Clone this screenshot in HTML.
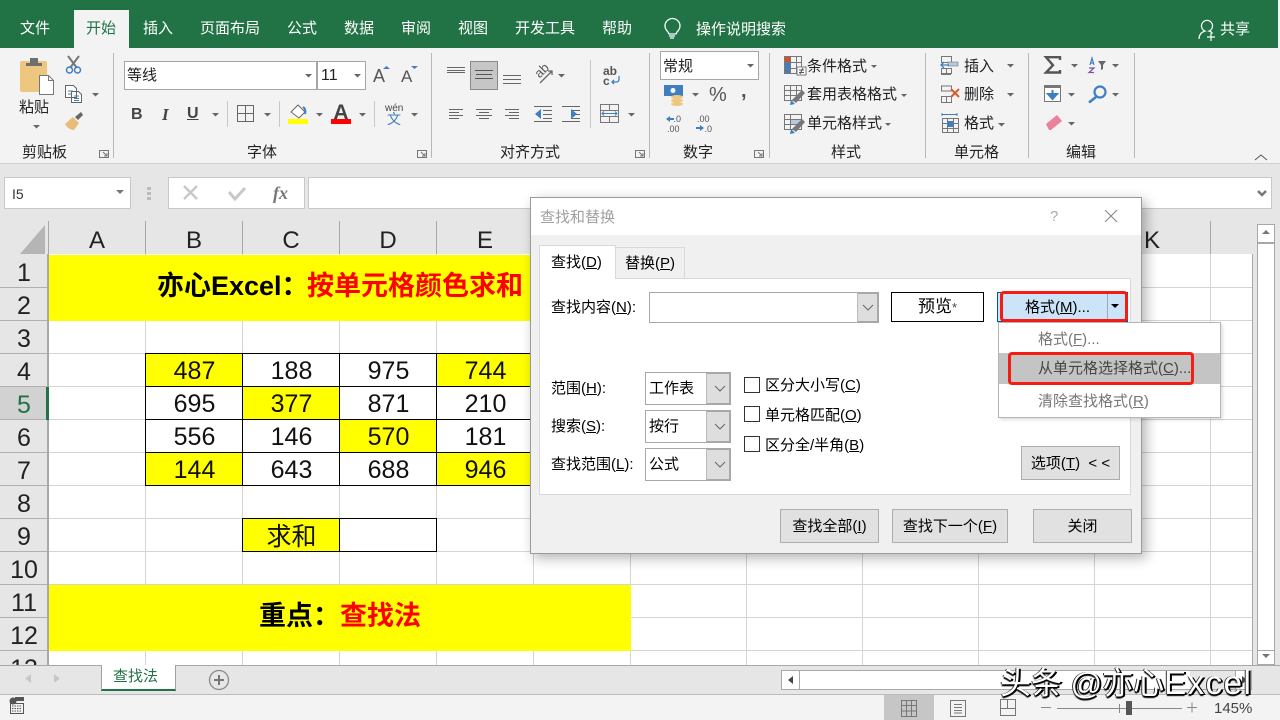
<!DOCTYPE html>
<html><head><meta charset="utf-8"><style>
html,body{margin:0;padding:0}
body{width:1280px;height:720px;overflow:hidden;position:relative;background:#e6e6e6;font-family:"Liberation Sans","Noto Sans CJK SC",sans-serif;color:#222}
div{position:absolute;box-sizing:border-box}
.t{white-space:nowrap;font-size:15px;line-height:20px;height:20px;padding-top:1px}
.w{color:#fff}.c{text-align:center;transform:translateX(-50%)}
.d{color:#000;font-size:15px}
.n{font-size:25px;line-height:33px;height:33px;width:97px;text-align:center;color:#111;padding-top:1px}
.r{font-size:25px;line-height:33px;height:33px;width:48px;left:0;text-align:center;color:#222;border-bottom:1px solid #b0b0b0;padding-top:2px}
.h{font-size:24px;line-height:33px;top:221px;height:33px;text-align:center;color:#222;transform:translateX(-50%);padding-top:3px}
.y{background:#ff0;height:33px}
.sel{background:#fff;border:1px solid #a8a8a8;height:33px;left:645px;width:86px}
.sel i{position:absolute;right:-1px;top:-1px;bottom:-1px;width:22px;background:#dedede;border:2px solid #a8a8a8;border-left:1px solid #bbb}
.btn{background:#e1e1e1;border:1px solid #adadad;text-align:center;font-size:15px;color:#000;line-height:34px}
.cb{width:16px;height:16px;left:744px;border:1px solid #333;background:#fff}
u{text-underline-offset:1px}
</style></head><body>
<!-- ribbon -->
<div style="left:0;top:0;width:1278px;height:48px;background:#217346"></div>
<div style="left:1278px;top:0;width:2px;height:48px;background:#f3f3f3"></div>
<div style="left:74px;top:10px;width:55px;height:38px;background:#f3f3f3"></div>
<div style="left:0;top:48px;width:1280px;height:116px;background:#f3f3f3;border-bottom:1px solid #d2d2d2"></div>
<div class="t w" style="left:20px;top:18px">文件</div>
<div class="t" style="left:86px;top:18px;color:#217346">开始</div>
<div class="t w" style="left:143px;top:18px">插入</div>
<div class="t w" style="left:200px;top:18px">页面布局</div>
<div class="t w" style="left:287px;top:18px">公式</div>
<div class="t w" style="left:344px;top:18px">数据</div>
<div class="t w" style="left:401px;top:18px">审阅</div>
<div class="t w" style="left:458px;top:18px">视图</div>
<div class="t w" style="left:515px;top:18px">开发工具</div>
<div class="t w" style="left:602px;top:18px">帮助</div>
<div class="t w" style="left:696px;top:19px">操作说明搜索</div>
<div class="t w" style="left:1220px;top:19px">共享</div>

<div style="left:124px;top:61px;width:193px;height:29px;background:#fff;border:1px solid #a6a6a6"></div>
<div style="left:317px;top:61px;width:49px;height:29px;background:#fff;border:1px solid #a6a6a6"></div>
<div style="left:660px;top:51px;width:99px;height:29px;background:#fff;border:1px solid #a6a6a6"></div>
<div style="left:470px;top:61px;width:28px;height:29px;background:#c6c6c6;border:1px solid #8a8a8a"></div>
<div class="t" style="left:127px;top:65px">等线</div>
<div class="t" style="left:321px;top:65px;font-size:16px">11</div>
<div class="t" style="left:663px;top:56px">常规</div>
<div class="t" style="left:19px;top:97px">粘贴</div>
<div class="t" style="left:22px;top:142px">剪贴板</div>
<div class="t" style="left:247px;top:142px">字体</div>
<div class="t" style="left:500px;top:142px">对齐方式</div>
<div class="t" style="left:683px;top:142px">数字</div>
<div class="t" style="left:831px;top:142px">样式</div>
<div class="t" style="left:954px;top:142px">单元格</div>
<div class="t" style="left:1066px;top:142px">编辑</div>
<div class="t" style="left:807px;top:56px">条件格式</div>
<div class="t" style="left:807px;top:84px">套用表格格式</div>
<div class="t" style="left:807px;top:113px">单元格样式</div>
<div class="t" style="left:964px;top:56px">插入</div>
<div class="t" style="left:964px;top:84px">删除</div>
<div class="t" style="left:964px;top:113px">格式</div>
<div class="t" style="left:131px;top:104px;font-weight:bold;font-size:16px;color:#444">B</div>
<div class="t" style="left:162px;top:104px;font-weight:bold;font-style:italic;font-family:'Liberation Serif',serif;font-size:17px;color:#444">I</div>
<div class="t" style="left:187px;top:103px;font-weight:bold;font-size:16px;color:#444;text-decoration:underline">U</div>
<div class="t" style="left:373px;top:65px;font-size:18px;color:#555">A</div>
<div class="t" style="left:401px;top:66px;font-size:17px;color:#555">A</div>
<div class="t" style="left:331px;top:102px;font-size:21px;font-weight:bold;color:#444;width:20px;text-align:center">A</div>
<div class="t" style="left:709px;top:84px;font-size:20px;color:#555">%</div>
<div class="t" style="left:741px;top:80px;font-size:20px;font-weight:bold;color:#555">,</div>
<div class="t" style="left:385px;top:98px;font-size:10px;color:#444">wén</div>
<div class="t" style="left:387px;top:108px;font-size:14px;color:#3f7fbf">文</div>
<div class="t" style="left:603px;top:60px;font-size:12px;font-weight:bold;color:#555">ab</div>
<div class="t" style="left:603px;top:70px;font-size:12px;font-weight:bold;color:#555">c</div>
<div class="t" style="left:534px;top:60px;font-size:13px;color:#555;transform:rotate(-45deg)">ab</div>
<div class="t" style="left:666px;top:108px;font-size:9px;color:#555">&nbsp;&nbsp;&nbsp;.0</div>
<div class="t" style="left:667px;top:118px;font-size:9px;color:#555">.00</div>
<div class="t" style="left:697px;top:108px;font-size:9px;color:#555">.00</div>
<div class="t" style="left:697px;top:118px;font-size:9px;color:#555">&nbsp;&nbsp;&nbsp;.0</div>

<svg style="position:absolute;left:0;top:0" width="1280" height="165" viewBox="0 0 1280 165" fill="none">
<g stroke="#b8b8b8"><path d="M113.500 53V158M431.500 53V158M649.500 53V158M769.500 53V158M925.500 53V158M1028.500 53V158M1134.500 53V158"/>
<path d="M227.500 101V127M279.500 101V127M374.500 101V127M590.500 60V128" stroke="#c8c8c8"/></g>
<!-- bulb -->
<path d="M668 32c-2-2-3-4-3-6a7.500 7.500 0 0 1 15 0c0 2-1 4-3 6l-1 2h-7z M669 36h6M670 38h4" stroke="#fff" stroke-width="1.300"/>
<!-- person -->
<path d="M1199 39c0-5 3-7 6-8a5.500 5.500 0 1 1 4 0c2 .5 3 1.500 3.500 2.500M1211 33v8M1207 37h8" stroke="#fff" stroke-width="1.200"/>
<!-- paste -->
<rect x="20" y="61" width="27" height="31" rx="2" fill="#edc67f"/>
<path d="M26 66v-3h4v-5h8v5h4v3z" fill="#6f6f6f"/>
<path d="M39.500 75.500h9l5 5v14h-14z" fill="#fff" stroke="#777"/>
<path d="M48.500 75.500v5h5" stroke="#777"/>
<!-- scissors -->
<path d="M68 56l9 12M79 56l-9 12" stroke="#777" stroke-width="2"/>
<circle cx="69.500" cy="70" r="3" stroke="#3f7fbf" stroke-width="1.500"/><circle cx="77.500" cy="70" r="3" stroke="#3f7fbf" stroke-width="1.500"/>
<!-- copy -->
<path d="M65.500 85.500h8l3 3v9h-11zM71.500 91.500h7l3 3v8h-10z" fill="#fff" stroke="#666"/>
<path d="M68 91h5M68 94h3M74 96h5M74 98.500h5M74 100.500h5" stroke="#3f7fbf"/>
<!-- brush -->
<path d="M65 124l8-7 6 6-5 7c-3 0-7-2-9-6z" fill="#e8bd7c"/><path d="M75 117l6-5 2 3-5 5z" fill="#666"/>
<!-- combos arrows -->
<g fill="#666">
<path d="M305 74h7l-3.500 3.500zM354 74h7l-3.500 3.500zM747 64h7l-3.500 3.500z"/>
<path d="M33 125h7l-3.500 3.500zM92 93h7l-3.500 3.500zM212 113h7l-3.500 3.500zM264 113h7l-3.500 3.500zM316 113h7l-3.500 3.500zM359 113h7l-3.500 3.500zM411 113h7l-3.500 3.500z"/>
<path d="M558 74h7l-3.500 3.500zM628 113h7l-3.500 3.500zM692 93h7l-3.500 3.500z"/>
<path d="M871 65h6l-3 3zM901 94h6l-3 3zM885 123h6l-3 3z"/>
<path d="M1007 64h7l-3.500 3.500zM1007 93h7l-3.500 3.500zM998 123h7l-3.500 3.500z"/>
<path d="M1071 64h7l-3.500 3.500zM1112 64h7l-3.500 3.500zM1068 93h7l-3.500 3.500zM1112 93h7l-3.500 3.500zM1068 122h7l-3.500 3.500z"/>
</g>
<!-- launchers -->
<g stroke="#777"><path d="M99.500 150.500h9v7h-9zM103 152l4 4M107 153v3h-3M417.500 150.500h9v7h-9zM421 152l4 4M425 153v3h-3M635.500 150.500h9v7h-9zM639 152l4 4M643 153v3h-3M754.500 150.500h9v7h-9zM758 152l4 4M762 153v3h-3"/></g>
<path d="M1255 160l6-5 6 5" stroke="#555"/>
<!-- font size arrows -->
<path d="M383 69h7l-3.500-3zM411 66h7l-3.500 3z" fill="#3f7fbf"/>
<!-- border icon -->
<path d="M237.500 105.500h16v16h-16zM245.500 105.500v16M237.500 113.500h16" stroke="#666"/>
<!-- fill -->
<path d="M291 112l7-7 7 7-6 6z" fill="#fff" stroke="#666"/><path d="M303 107c2 1 3 4 2 7" stroke="#3f7fbf" stroke-width="2"/>
<rect x="288" y="119" width="20" height="5" fill="#ff0"/>
<rect x="331" y="119" width="20" height="5" fill="#f00"/>
<!-- align -->
<g stroke="#666">
<path d="M447 67.500h18M447 70.500h18M447 72.500h18"/>
<path d="M475 70.500h18M476 74.500h16M475 78.500h18" stroke="#555"/>
<path d="M503 75.500h18M503 79.500h18M503 83.500h18"/>
<path d="M449 109.500h14M449 112.500h10M449 115.500h14M449 118.500h10"/>
<path d="M476 109.500h16M479 112.500h10M476 115.500h16M479 118.500h10"/>
<path d="M505 109.500h14M509 112.500h10M505 115.500h14M509 118.500h10"/>
<path d="M534 106.500h18M543 110.500h9M543 114.500h9M543 118.500h9M534 121.500h18"/>
<path d="M562 106.500h18M571 110.500h9M571 114.500h9M571 118.500h9M562 121.500h18"/>
<path d="M540 83l12-12M548 71h4v4" stroke-width="1.300"/>
<path d="M600.500 104.500h18v18h-18zM600 110.500h19M600 116.500h19M609.500 104v6M609.500 117v6" stroke="#777"/>
</g>
<path d="M541 109l-6 5 6 5zM571 109l6 5-6 5" fill="#3f7fbf" stroke="none"/>
<path d="M602 113.500h15M604 111.500l-2 2 2 2M615 111.500l2 2-2 2" stroke="#3f7fbf"/>
<path d="M619 76v3c0 2-1 3-2.500 3H612M614 80l-2 2 2 2" stroke="#3f7fbf" stroke-width="1.300"/>
<!-- currency -->
<rect x="664" y="85" width="19" height="11" fill="#3f7fbf"/><circle cx="673" cy="90.500" r="2.500" fill="#fff"/>
<ellipse cx="677" cy="97" rx="6" ry="2" fill="#edc67f"/><ellipse cx="677" cy="100.500" rx="6" ry="2" fill="#edc67f"/><ellipse cx="677" cy="104" rx="6" ry="2" fill="#edc67f"/>
<path d="M666 119l4-3v2h4v2h-4v2z" fill="#3f7fbf"/><path d="M704 128l-4 3v-2h-4v-2h4v-2z" fill="#3f7fbf"/>
<!-- cond formatting -->
<g stroke="#777"><path d="M784.500 56.500h17v17h-17zM790.500 56v18M796.500 56v18M784 62.500h18M784 68.500h18" />
<path d="M784.500 85.500h17v15h-17zM790.500 85v15M796.500 85v15M784 90.500h18M784 95.500h18"/>
<path d="M784.500 114.500h17v15h-17zM784 119.500h18M784 124.500h18M790.500 114v16"/></g>
<rect x="785" y="57" width="5" height="5" fill="#d0532c"/><rect x="785" y="63" width="5" height="5" fill="#3f7fbf"/><rect x="785" y="69" width="5" height="4" fill="#3f7fbf"/>
<rect x="797" y="67" width="9" height="8" fill="#fff" stroke="#777"/><path d="M799 70h5M799 72.500h5M803 68l-3 6" stroke="#555"/>
<path d="M792 100l10-10 3 3-9 10z" fill="#777"/><path d="M791 100l4 4-5 1z" fill="#3f7fbf"/>
<rect x="791" y="120" width="10" height="4" fill="#b6c9e2"/>
<path d="M792 129l10-10 3 3-9 10z" fill="#777"/><path d="M791 129l4 4-5 1z" fill="#3f7fbf"/>
<!-- cells -->
<g stroke="#777"><path d="M941.500 56.500h10v6h-10zM941.500 68.500h10v5h-10zM946.500 68v6M941 74.500h10"/>
<path d="M941.500 86h10v5h-10zM941.500 96.500h10v6h-10zM946.500 97v6"/>
<path d="M942.500 118.500h16v14h-16zM942 123.500h17M942 128.500h17M947.500 118v15M953.500 118v15"/></g>
<rect x="948" y="62" width="10" height="4" fill="#b6c9e2" stroke="#777" stroke-width=".6"/>
<path d="M941 65h8M944 62l-3 3 3 3" stroke="#3f7fbf" stroke-width="1.300"/>
<path d="M951 89l8 8M959 89l-8 8" stroke="#dc5a2d" stroke-width="2"/>
<rect x="947" y="121" width="6" height="6" fill="#3f7fbf"/>
<path d="M941.500 114.500h16M942 113v3M957 113v3" stroke="#3f7fbf"/>
<!-- editing -->
<path d="M1060 60v-2.800h-14l7 8-7 7.300h14V70" stroke="#555" stroke-width="2.400"/>
<path d="M1090 65l2-7 2 7M1090.500 63h3" stroke="#3f7fbf" stroke-width="1.200"/>
<path d="M1089 68h5l-5 4.500h5" stroke="#7a52a8" stroke-width="1.200"/>
<path d="M1098 61h8l-3 4v4l-2 1v-5z" fill="#666"/>
<rect x="1044.500" y="85.500" width="16" height="16" fill="#fff" stroke="#777"/><rect x="1044" y="85" width="17" height="3" fill="#777"/>
<path d="M1052.500 90v8M1048 94l4.500 5 4.500-5z" fill="#3f7fbf" stroke="#3f7fbf" stroke-width="2"/>
<circle cx="1100" cy="92" r="5.500" stroke="#3f7fbf" stroke-width="2.200"/><path d="M1096 97l-7 5.500" stroke="#3f7fbf" stroke-width="2.500"/>
<path d="M1046 124l11-9 5 6-11 9h-2z" fill="#e9829a"/>
</svg>

<!-- formula bar -->
<div style="left:4px;top:177px;width:127px;height:32px;background:#fff;border:1px solid #c8c8c8"></div>
<div class="t" style="left:12px;top:183px;font-size:14px;color:#333">I5</div>
<div style="left:168px;top:177px;width:137px;height:32px;background:#fff;border:1px solid #c8c8c8"></div>
<div style="left:308px;top:177px;width:964px;height:32px;background:#fff;border:1px solid #c8c8c8"></div>
<svg style="position:absolute;left:0;top:170px" width="1280" height="50" fill="none">
<path d="M116 20h8l-4 4z" fill="#777"/><path d="M147 17h4v3h-4zM147 22h4v3h-4zM147 27h4v3h-4z" fill="#bbb"/>
<path d="M184 16l13 13M197 16l-13 13" stroke="#c8c8c8" stroke-width="2.500"/>
<path d="M229 22l6 7 10-11" stroke="#c8c8c8" stroke-width="3"/>
<path d="M1258 21l4 4 4-4" stroke="#777" stroke-width="2.500"/>
</svg>
<div class="t" style="left:273px;top:182px;font-family:'Liberation Serif',serif;font-style:italic;font-weight:bold;font-size:18px;color:#777">fx</div>

<!-- headers -->
<svg style="position:absolute;left:0;top:221px" width="1260" height="34" fill="none">
<path d="M45 5v29H20z" fill="#b5b5b5" transform="translate(0,-1)"/>
<path d="M48.500 0V33M145.500 0V33M242.500 0V33M339.500 0V33M436.500 0V33M533.500 0V33M630.500 0V33M746.500 0V33M862.500 0V33M978.500 0V33M1094.500 0V33M1210.500 0V33" stroke="#a8a8a8"/>
<path d="M48 33.500H1253" stroke="#9b9b9b"/>
</svg>
<div class="h" style="left:97px">A</div><div class="h" style="left:194px">B</div><div class="h" style="left:291px">C</div><div class="h" style="left:388px">D</div><div class="h" style="left:485px">E</div><div class="h" style="left:1152px">K</div>

<!-- sheet -->
<div style="left:48px;top:254px;width:1205px;height:411px;background:#fff;overflow:hidden">
<svg style="position:absolute;left:-48px;top:-254px" width="1260" height="670" fill="none">
<g stroke="#d4d4d4">
<path d="M145.500 254V665M242.500 254V665M339.500 254V665M436.500 254V665M533.500 254V665M630.500 254V665M746.500 254V665M862.500 254V665M978.500 254V665M1094.500 254V665M1210.500 254V665"/>
<path d="M48 287.500H1253M48 320.500H1253M48 353.500H1253M48 386.500H1253M48 419.500H1253M48 452.500H1253M48 485.500H1253M48 518.500H1253M48 551.500H1253M48 584.500H1253M48 617.500H1253M48 650.500H1253"/>
</g></svg>
</div>
<div style="left:1252px;top:254px;width:1px;height:411px;background:#a8a8a8"></div>
<div style="left:49px;top:255px;width:582px;height:66px;background:#ff0"></div>
<div style="left:49px;top:585px;width:582px;height:66px;background:#ff0"></div>
<div class="y" style="left:146px;top:354px;width:96px"></div>
<div class="y" style="left:437px;top:354px;width:97px"></div>
<div class="y" style="left:243px;top:387px;width:96px"></div>
<div class="y" style="left:340px;top:420px;width:96px"></div>
<div class="y" style="left:146px;top:453px;width:96px"></div>
<div class="y" style="left:437px;top:453px;width:97px"></div>
<div class="y" style="left:243px;top:519px;width:96px"></div>
<svg style="position:absolute;left:0;top:0" width="640" height="560" fill="none">
<path d="M145.500 353.500H534M145.500 386.500H534M145.500 419.500H534M145.500 452.500H534M145.500 485.500H534M145.500 353V486M242.500 353V486M339.500 353V486M436.500 353V486M242.500 518.500H436.500V551.500H242.500ZM339.500 518V552" stroke="#000"/>
</svg>
<div class="t" style="left:157px;top:269px;height:33px;line-height:33px;font-size:27px;font-weight:bold;color:#000">亦心Excel：<span style="color:#f00;position:absolute;left:150px;top:1px">按单元格颜色求和</span></div>
<div class="t" style="left:259px;top:599px;height:33px;line-height:33px;font-size:27px;font-weight:bold;color:#000">重点：<span style="color:#f00">查找法</span></div>
<div class="n" style="left:146px;top:354px">487</div><div class="n" style="left:243px;top:354px">188</div><div class="n" style="left:340px;top:354px">975</div><div class="n" style="left:437px;top:354px">744</div>
<div class="n" style="left:146px;top:387px">695</div><div class="n" style="left:243px;top:387px">377</div><div class="n" style="left:340px;top:387px">871</div><div class="n" style="left:437px;top:387px">210</div>
<div class="n" style="left:146px;top:420px">556</div><div class="n" style="left:243px;top:420px">146</div><div class="n" style="left:340px;top:420px">570</div><div class="n" style="left:437px;top:420px">181</div>
<div class="n" style="left:146px;top:453px">144</div><div class="n" style="left:243px;top:453px">643</div><div class="n" style="left:340px;top:453px">688</div><div class="n" style="left:437px;top:453px">946</div>
<div class="n" style="left:243px;top:520px">求和</div>

<!-- row headers -->
<div style="left:0;top:255px;width:48px;height:410px;overflow:hidden;background:#e6e6e6">
<div class="r" style="top:0">1</div><div class="r" style="top:33px">2</div><div class="r" style="top:66px">3</div><div class="r" style="top:99px">4</div>
<div class="r" style="top:132px;background:#d2d2d2;color:#217346">5</div><div class="r" style="top:165px">6</div><div class="r" style="top:198px">7</div><div class="r" style="top:231px">8</div>
<div class="r" style="top:264px">9</div><div class="r" style="top:297px">10</div><div class="r" style="top:330px">11</div><div class="r" style="top:363px">12</div><div class="r" style="top:396px">13</div>
</div>
<div style="left:47px;top:254px;width:2px;height:411px;background:#a8a8a8"></div>
<div style="left:46px;top:387px;width:3px;height:33px;background:#217346"></div>

<!-- right scrollbar -->
<div style="left:1253px;top:221px;width:27px;height:444px;background:#e6e6e6"></div>
<div style="left:1257px;top:224px;width:18px;height:441px;background:#fff;border:1px solid #a8a8a8"></div>
<div style="left:1257px;top:242px;width:18px;height:2px;background:#a8a8a8"></div>
<div style="left:1257px;top:650px;width:18px;height:1px;background:#a8a8a8"></div>
<svg style="position:absolute;left:1257px;top:224px" width="18" height="441"><path d="M5 10h8l-4-4zM5 430h8l-4 4z" fill="#777"/></svg>

<!-- tab bar -->
<div style="left:0;top:665px;width:1280px;height:30px;background:#e6e6e6;border-top:1px solid #a8a8a8;border-bottom:1px solid #bbb"></div>
<div style="left:101px;top:665px;width:75px;height:26px;background:#fff;border:1px solid #a0a0a0;border-top:0;border-bottom:2px solid #217346"></div>
<div class="t" style="left:113px;top:666px;color:#217346">查找法</div>
<svg style="position:absolute;left:0;top:665px" width="240" height="30" fill="none">
<path d="M31 9v9l-6-4.500zM54 9v9l6-4.500z" fill="#c8c8c8"/>
<circle cx="219" cy="15" r="9.500" stroke="#8a8a8a" stroke-width="1.300"/><path d="M219 10v10M214 15h10" stroke="#777" stroke-width="2"/>
</svg>
<div style="left:781px;top:670px;width:471px;height:20px;background:#fff;border:1px solid #a8a8a8"></div>
<div style="left:1190px;top:671px;width:45px;height:18px;background:#e6e6e6"></div>
<div style="left:1235px;top:671px;width:1px;height:18px;background:#a8a8a8"></div>
<div style="left:799px;top:671px;width:1px;height:18px;background:#a8a8a8"></div>
<svg style="position:absolute;left:781px;top:670px" width="480" height="20"><path d="M12 6v8l-5-4zM461 6v8l5-4z" fill="#444"/></svg>

<!-- status bar -->
<div style="left:0;top:695px;width:1280px;height:25px;background:#f3f3f3"></div>
<div style="left:884px;top:695px;width:50px;height:25px;background:#c6c6c6"></div>
<svg style="position:absolute;left:0;top:695px" width="1280" height="25" fill="none">
<circle cx="13" cy="6" r="3.500" fill="#555"/><path d="M15 2h9v4h-9z" fill="#555"/><path d="M10.500 8.500h13v10h-13z" stroke="#555"/><path d="M12 11h10M12 13.500h10M12 16h10" stroke="#555" stroke-dasharray="1.500 1"/>
<path d="M901.500 5.500h15v16h-15zM901 10.500h16M901 16h16M906.500 5v16M911.500 5v16" stroke="#777"/>
<path d="M950.500 5.500h15v16h-15zM954 9.500h8M954 12.500h8M954 15.500h8M954 18h8" stroke="#777"/>
<path d="M1000.500 4.500h15v16h-15zM1000 13.500h16M1007.500 4v9" stroke="#777"/>
<path d="M1041 12.500h10M1187 12.500h10M1192 7.500v10M1057 13.500H1182M1119.500 9v9" stroke="#888"/>
<rect x="1126" y="6" width="6" height="14" fill="#555"/>
</svg>
<div class="t" style="left:1214px;top:698px;font-size:15px;color:#444">145%</div>

<!-- dialog -->
<div style="left:530px;top:197px;width:612px;height:357px;background:#f0f0f0;border:1px solid #9a9a9a;box-shadow:4px 4px 12px rgba(0,0,0,.3)"></div>
<div style="left:531px;top:198px;width:610px;height:37px;background:#fff"></div>
<div class="t" style="left:540px;top:207px;font-size:15px;color:#a0a0a0">查找和替换</div>
<div class="t" style="left:1050px;top:206px;font-size:15px;color:#aaa">?</div>
<svg style="position:absolute;left:1100px;top:205px" width="20" height="20"><path d="M5 5l12 12M17 5l-12 12" stroke="#888" stroke-width="1.100"/></svg>
<div style="left:539px;top:278px;width:592px;height:217px;background:#fff;border:1px solid #d9d9d9"></div>
<div style="left:539px;top:245px;width:77px;height:34px;background:#fff;border:1px solid #d9d9d9;border-bottom:0"></div>
<div style="left:616px;top:247px;width:69px;height:32px;background:#f0f0f0;border:1px solid #d9d9d9;border-left:0"></div>
<div class="t d" style="left:551px;top:252px">查找(<u>D</u>)</div>
<div class="t d" style="left:625px;top:253px">替换(<u>P</u>)</div>
<div class="t d" style="left:551px;top:297px">查找内容(<u>N</u>):</div>
<div style="left:649px;top:292px;width:230px;height:31px;background:#fff;border:1px solid #a8a8a8"></div>
<div style="left:857px;top:292px;width:22px;height:31px;background:#dedede;border:2px solid #a8a8a8;border-left:1px solid #bbb"></div>
<div style="left:891px;top:292px;width:93px;height:30px;background:#fff;border:1px solid #000;text-align:center;font-size:17px;line-height:28px;color:#000">预览<span style="font-size:13px;color:#444">*</span></div>
<div style="left:997px;top:292px;width:131px;height:30px;background:#cce4f7;border:1px solid #005499"></div>
<div style="left:1107px;top:294px;width:1px;height:26px;background:#9ab"></div>
<div class="t d" style="left:1025px;top:297px">格式(<u>M</u>)...</div>
<svg style="position:absolute;left:1108px;top:302px" width="18" height="10"><path d="M3 2h8l-4 4z" fill="#000"/></svg>
<div style="left:1000px;top:291px;width:128px;height:31px;border:3px solid #f51c14;border-radius:4px"></div>
<div style="left:998px;top:322px;width:223px;height:96px;background:#fff;border:1px solid #b4b4b4;box-shadow:2px 2px 3px rgba(0,0,0,.12)"></div>
<div style="left:999px;top:353px;width:221px;height:31px;background:#c4c4c4"></div>
<div class="t d" style="left:1038px;top:329px;color:#777">格式(<u>F</u>)...</div>
<div class="t d" style="left:1038px;top:358px;color:#444">从单元格选择格式(<u>C</u>)...</div>
<div class="t d" style="left:1038px;top:391px;color:#777">清除查找格式(<u>R</u>)</div>
<div style="left:1008px;top:352px;width:186px;height:33px;border:3px solid #f51c14;border-radius:4px"></div>

<div class="t d" style="left:551px;top:378px">范围(<u>H</u>):</div>
<div class="t d" style="left:551px;top:416px">搜索(<u>S</u>):</div>
<div class="t d" style="left:551px;top:454px">查找范围(<u>L</u>):</div>
<div class="sel" style="top:372px"><i></i></div><div class="sel" style="top:410px"><i></i></div><div class="sel" style="top:448px"><i></i></div>
<div class="t d" style="left:649px;top:378px">工作表</div><div class="t d" style="left:649px;top:416px">按行</div><div class="t d" style="left:649px;top:454px">公式</div>
<svg style="position:absolute;left:0;top:0" width="900" height="490" fill="none" stroke="#666">
<path d="M863 305l5 5 5-5M715 386l5 5 5-5M715 424l5 5 5-5M715 462l5 5 5-5"/>
</svg>
<div class="cb" style="top:377px"></div><div class="cb" style="top:406px"></div><div class="cb" style="top:436px"></div>
<div class="t d" style="left:765px;top:375px">区分大小写(<u>C</u>)</div>
<div class="t d" style="left:765px;top:405px">单元格匹配(<u>O</u>)</div>
<div class="t d" style="left:765px;top:435px">区分全/半角(<u>B</u>)</div>
<div class="btn" style="left:1021px;top:446px;width:99px;height:34px">选项(<u>T</u>)&nbsp; &lt; &lt;</div>
<div class="btn" style="left:780px;top:509px;width:99px;height:34px">查找全部(<u>I</u>)</div>
<div class="btn" style="left:892px;top:509px;width:116px;height:34px">查找下一个(<u>F</u>)</div>
<div class="btn" style="left:1033px;top:509px;width:99px;height:34px">关闭</div>

<!-- watermark -->
<div class="t w" style="left:1000px;top:663px;height:38px;line-height:38px;font-size:31px;text-shadow:1px 1px 0 #000,2px 1px 0 #000,-1px 0 0 #333,0 2px 1px #000">头条 @亦心<span style="font-size:33px;letter-spacing:1.500px">Excel</span></div>
</body></html>
